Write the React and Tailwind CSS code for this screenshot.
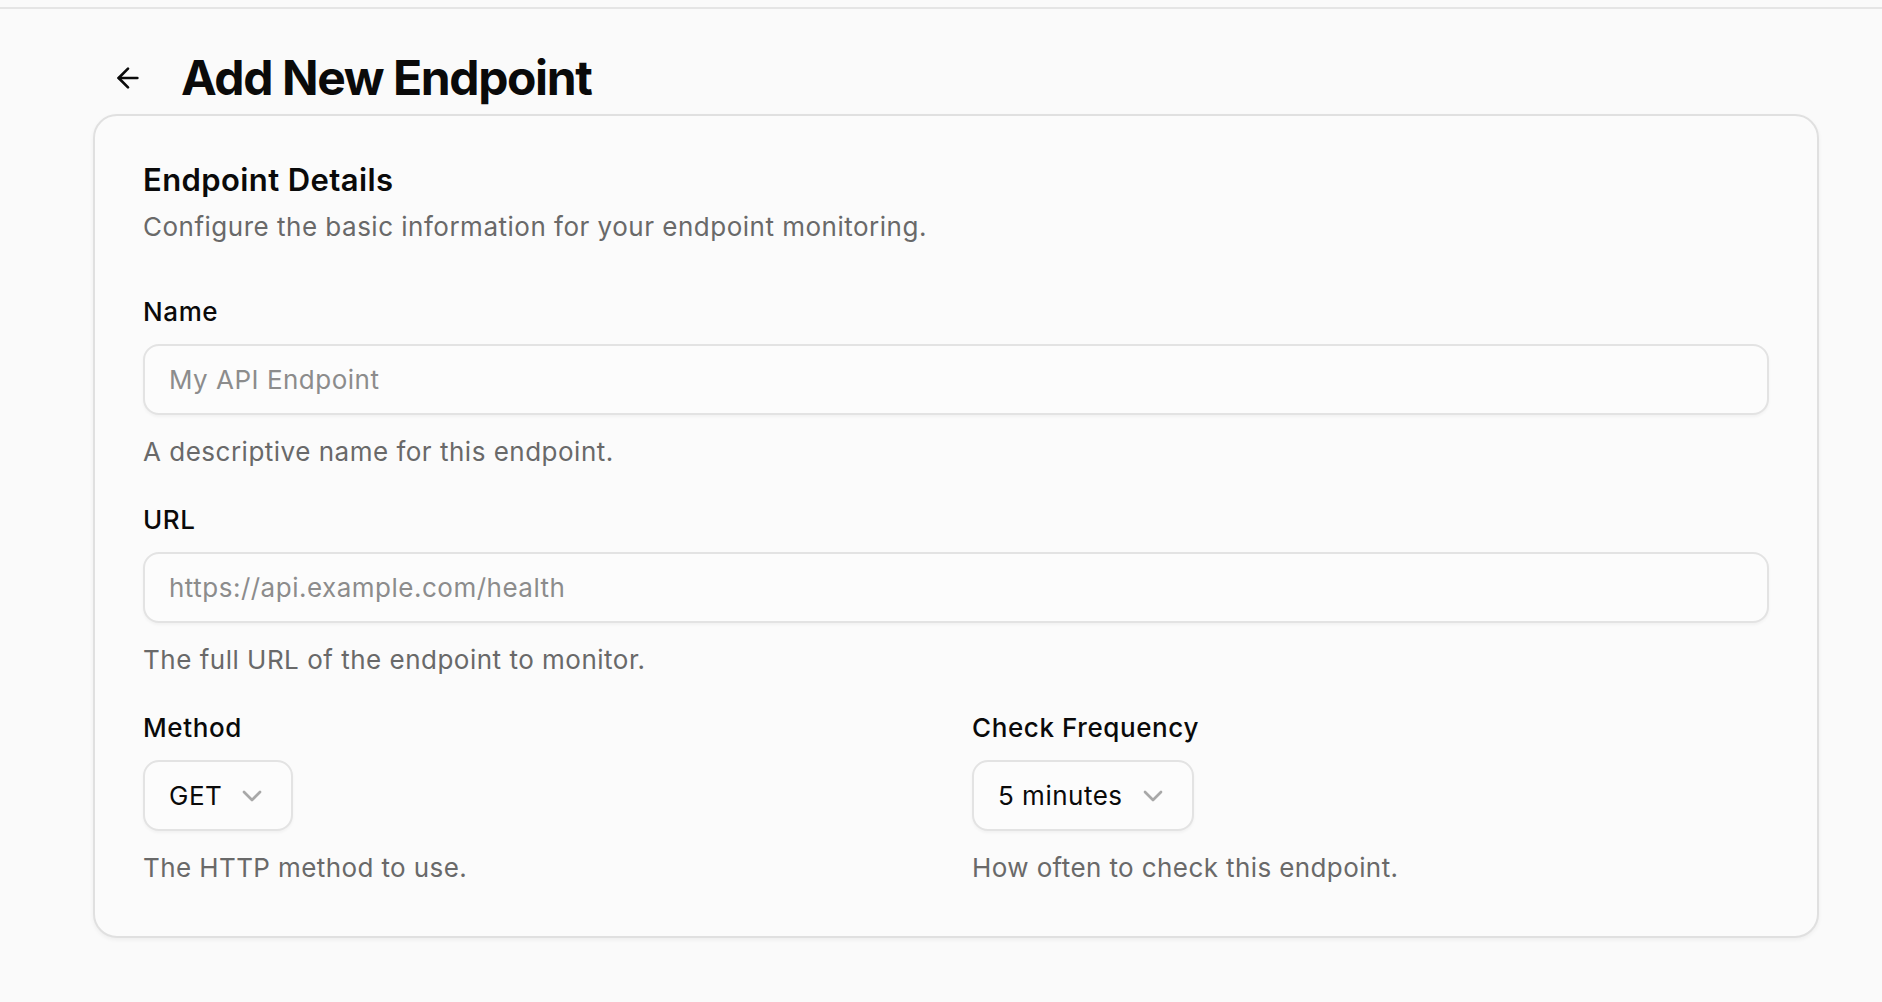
import React from "react";
import { ArrowLeft, ChevronDown } from "lucide-react";

function Field({ label, placeholder, help }) {
  return (
    <div className="flex flex-col">
      <label className="text-[26px] leading-[36px] font-medium tracking-[0.6px] text-[#0a0a0a]">{label}</label>
      <input
        placeholder={placeholder}
        className="mt-[14px] h-[71px] w-full rounded-[16px] border-2 border-[#e3e3e3] bg-[#fcfcfc] px-[24px] text-[26px] tracking-[0.5px] text-[#0a0a0a] placeholder:text-[#8c8c8c] outline-none shadow-[0_2px_3px_rgba(0,0,0,0.04)]"
      />
      <p className="mt-[19px] text-[26px] leading-[36px] tracking-[0.5px] text-[#696969]">{help}</p>
    </div>
  );
}

function SelectField({ label, value, help }) {
  return (
    <div className="flex flex-col">
      <label className="text-[26px] leading-[36px] font-medium tracking-[0.6px] text-[#0a0a0a]">{label}</label>
      <div className="mt-[14px] flex">
        <button className="flex h-[71px] items-center gap-[14px] rounded-[16px] border-2 border-[#e3e3e3] bg-[#fcfcfc] pl-[24px] pr-[23px] text-[26px] tracking-[0.5px] text-[#0a0a0a] shadow-[0_2px_3px_rgba(0,0,0,0.04)]">
          <span>{value}</span>
          <ChevronDown size={32} strokeWidth={2} className="text-[#a8a8a8]" />
        </button>
      </div>
      <p className="mt-[19px] text-[26px] leading-[36px] tracking-[0.4px] text-[#696969]">{help}</p>
    </div>
  );
}

export default function App() {
  return (
    <div className="min-h-screen bg-[#fafafa] font-['Inter',sans-serif]">
      <div className="h-[9px] border-b-2 border-[#e5e5e5]" />
      <div className="pl-[92px] pr-[63px]">
        <div className="mt-[33px] flex items-center gap-[17px]">
          <button className="flex h-[72px] w-[72px] items-center justify-center rounded-[12px] text-[#0a0a0a]">
            <ArrowLeft size={32} strokeWidth={2} />
          </button>
          <h1 className="text-[48px] leading-[48px] font-bold tracking-[-1.4px] text-[#0a0a0a]">Add New Endpoint</h1>
        </div>
        <div className="ml-[1px] rounded-[24px] border-2 border-[#e0e0e0] bg-[#fbfbfb] px-[48px] pt-[48px] pb-[50px] shadow-[0_2px_4px_rgba(0,0,0,0.05)]">
          <h2 className="text-[31px] leading-[31px] font-semibold tracking-[0.4px] text-[#0a0a0a]">Endpoint Details</h2>
          <p className="mt-[14px] text-[26px] leading-[36px] tracking-[0.5px] text-[#696969]">
            Configure the basic information for your endpoint monitoring.
          </p>
          <div className="mt-[49px] flex flex-col gap-[32px]">
            <Field label="Name" placeholder="My API Endpoint" help="A descriptive name for this endpoint." />
            <Field label="URL" placeholder="https://api.example.com/health" help="The full URL of the endpoint to monitor." />
            <div className="grid grid-cols-2 gap-[32px]">
              <SelectField label="Method" value="GET" help="The HTTP method to use." />
              <SelectField label="Check Frequency" value="5 minutes" help="How often to check this endpoint." />
            </div>
          </div>
        </div>
      </div>
    </div>
  );
}
